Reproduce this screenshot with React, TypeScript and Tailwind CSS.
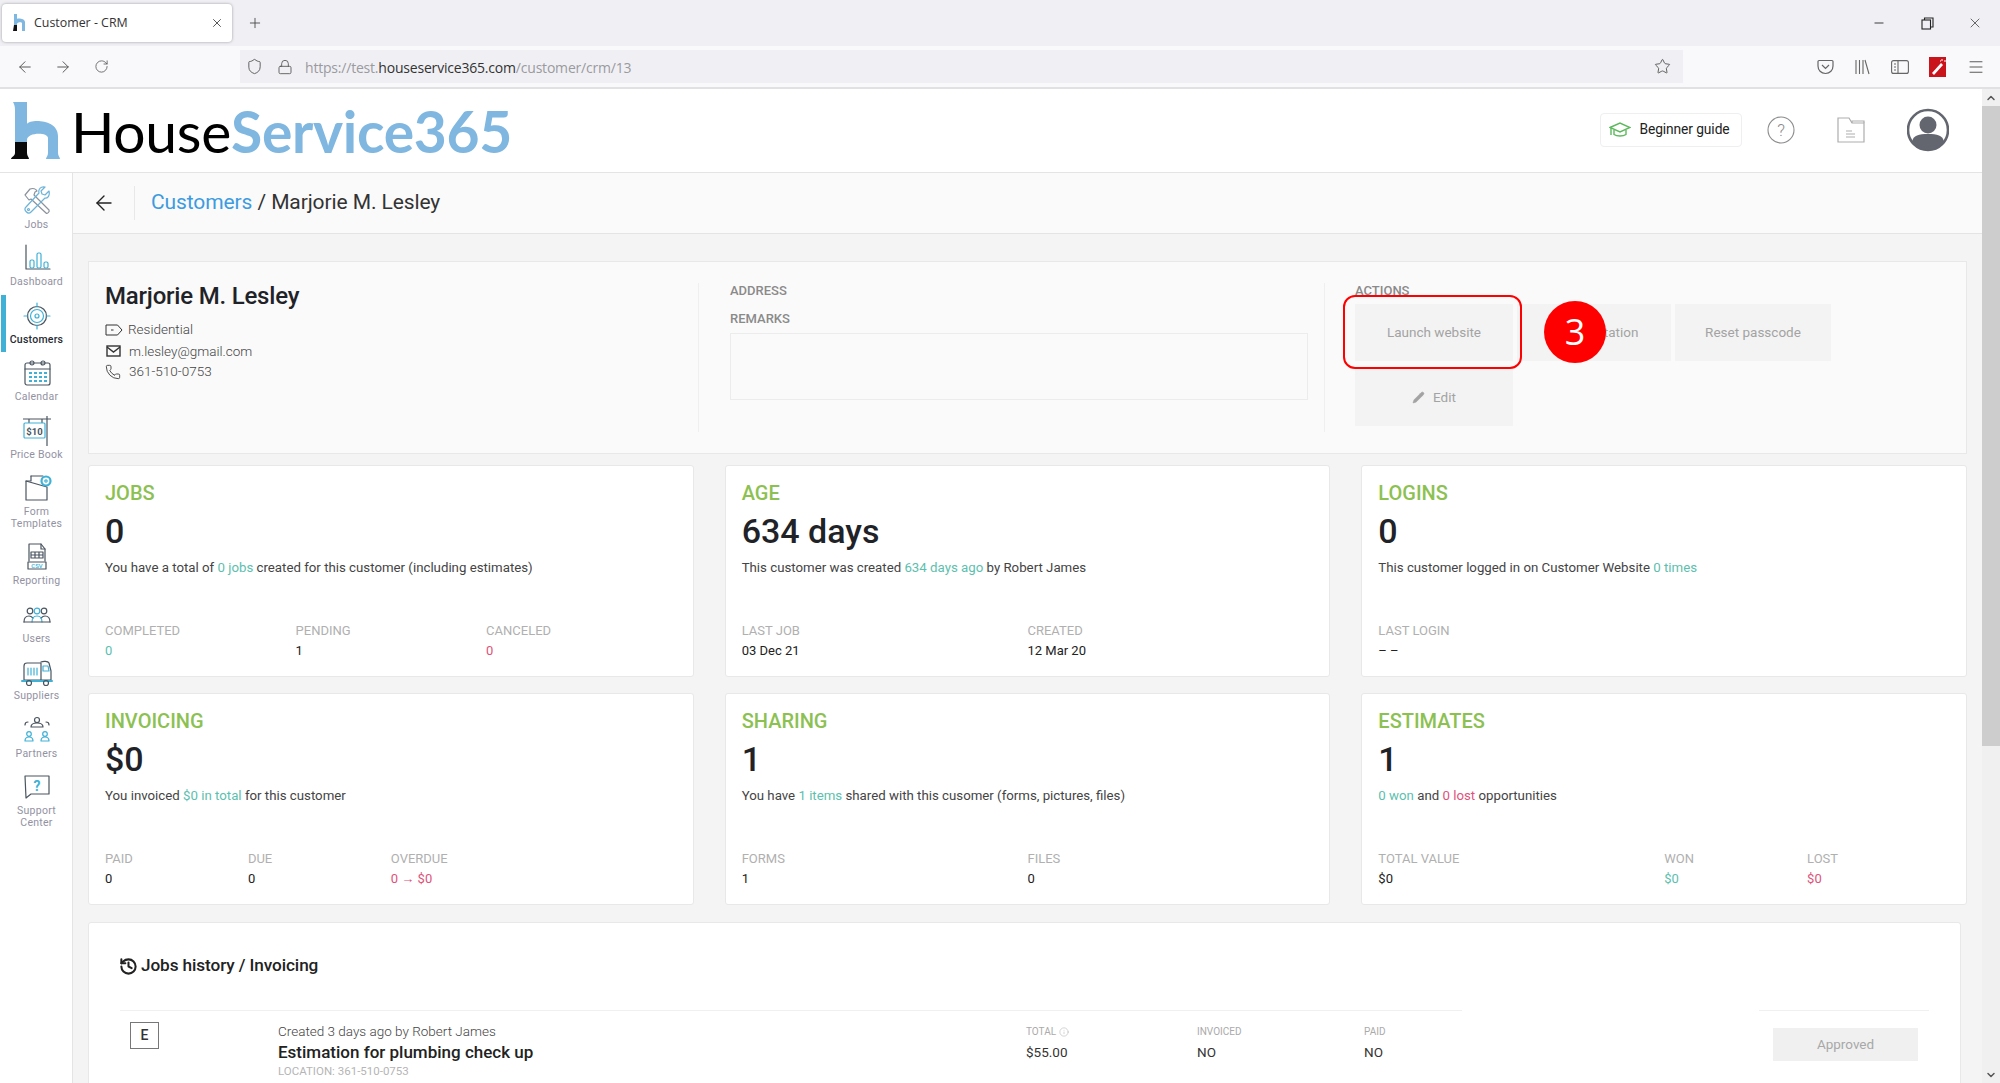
import React from "react";
import { ArrowLeft, ArrowRight, RotateCw, Shield, Lock, Star, X, Plus, Minus, Menu, Pencil, History, ChevronUp, ChevronDown, Info, Phone } from "lucide-react";

const Ink = "#4a5560";
const Blue = "#3fb1d6";

function Svg({ children, w = 30, h = 30, vb = "0 0 30 30" }: { children: React.ReactNode; w?: number; h?: number; vb?: string }) {
  return (
    <svg width={w} height={h} viewBox={vb} fill="none" stroke={Ink} strokeWidth="1.2" strokeLinecap="round" strokeLinejoin="round">
      {children}
    </svg>
  );
}

const icons: Record<string, React.ReactNode> = {
  jobs: (
    <Svg>
      <path d="M3 9 8 3c3-1 6 0 7 2l-2 1-1 3 15 15c1 2-2 4-3 3L9 13l-2 1z" stroke="#8a929c" />
      <path d="M27 5l-4 4-3-1-1-3 4-4c-4-1-7 2-6 6L4 21c-3 3 2 8 5 5L23 12c3 1 5-3 4-7z" stroke="#6db3d8" />
      <circle cx="6.500" cy="23.500" r="1" stroke="#6db3d8" />
    </Svg>
  ),
  dashboard: (
    <Svg>
      <path d="M4 2v24h24" />
      <rect x="8" y="17" width="4" height="8" rx="1.500" stroke={Blue} />
      <rect x="15" y="10" width="4" height="15" rx="1.500" stroke={Blue} />
      <rect x="22" y="19" width="4" height="6" rx="1.500" stroke={Blue} />
    </Svg>
  ),
  customers: (
    <Svg>
      <circle cx="15" cy="15" r="9.500" />
      <circle cx="15" cy="15" r="6.500" stroke={Blue} />
      <circle cx="15" cy="15" r="2" stroke={Blue} />
      <path d="M15 2v4M15 24v4M2 15h4M24 15h4" stroke={Blue} />
    </Svg>
  ),
  calendar: (
    <Svg>
      <rect x="3" y="5" width="25" height="22" rx="2" />
      <path d="M3 11h25" />
      <circle cx="10" cy="5" r="2" />
      <circle cx="21" cy="5" r="2" />
      <path d="M7 15h3M12 15h3M17 15h3M22 15h3M7 19h3M12 19h3M17 19h3M22 19h3M7 23h3M12 23h3M17 23h3M22 23h3" stroke={Blue} strokeWidth="2.200" strokeLinecap="butt" />
    </Svg>
  ),
  price: (
    <svg width="30" height="30" viewBox="0 0 30 30" fill="none" stroke={Ink} strokeWidth="1.2">
      <path d="M1 3h28M25 0v30" />
      <path d="M7 3v4M20 3v4" />
      <rect x="2" y="7" width="21" height="15" rx="1" stroke={Blue} />
      <text x="12.500" y="18.500" textAnchor="middle" fontSize="9.500" fontWeight="700" fill={Ink} stroke="none" fontFamily="Roboto">$10</text>
    </svg>
  ),
  form: (
    <Svg>
      <path d="M9 3h12M25 14v13H4V8z" />
      <path d="M4 8h5V3" />
      <circle cx="24" cy="8" r="4.500" stroke={Blue} strokeWidth="2.200" />
      <circle cx="24" cy="8" r="1.200" stroke={Blue} />
    </Svg>
  ),
  reporting: (
    <Svg>
      <path d="M7 2h12l4 5v12M7 19V2" />
      <path d="M19 2v5h4" />
      <path d="M9 10h12v6H9zM13 10v6M17 10v6M9 13h12" />
      <rect x="6" y="20" width="18" height="7" fill="#fff" stroke={Ink} />
      <text x="15" y="26" textAnchor="middle" fontSize="6" fontWeight="500" fill={Blue} stroke="none" fontFamily="Roboto">CSV</text>
    </Svg>
  ),
  users: (
    <Svg>
      <circle cx="8" cy="11" r="2.800" />
      <circle cx="22" cy="11" r="2.800" />
      <circle cx="15" cy="11" r="2.800" stroke={Blue} />
      <path d="M2 22c0-4 2-6 5-6 2 0 3 1 4 2M28 22c0-4-2-6-5-6-2 0-3 1-4 2" />
      <path d="M10 22c0-4 2-6 5-6s5 2 5 6" stroke={Blue} />
      <path d="M2 22h26" />
    </Svg>
  ),
  suppliers: (
    <Svg w={32} h={30} vb="0 0 32 30">
      <path d="M3 9c0-2 1-3 3-3h14v17H3z" />
      <path d="M7 11v7M10 11v7M13 11v7M16 11v7" stroke={Blue} />
      <path d="M20 5c2-1 7-1 8 1l2 8v9H20" />
      <path d="M22 9h5l1 5h-6z" stroke={Blue} />
      <path d="M1 24h30" stroke={Blue} strokeWidth="2" />
      <circle cx="8" cy="26" r="2.500" />
      <circle cx="25" cy="26" r="2.500" />
    </Svg>
  ),
  partners: (
    <Svg w={28} h={30} vb="0 0 28 30">
      <circle cx="14" cy="5" r="2.500" />
      <path d="M8 12c0-3 3-4 6-4s6 1 6 4z" />
      <path d="M2 10c0-2 1-3 3-3M26 10c0-2-1-3-3-3" />
      <circle cx="6" cy="19" r="2.300" stroke={Blue} />
      <path d="M2 26c0-3 2-4 4-4s4 1 4 4z" stroke={Blue} />
      <circle cx="22" cy="19" r="2.300" stroke={Blue} />
      <path d="M18 26c0-3 2-4 4-4s4 1 4 4z" stroke={Blue} />
    </Svg>
  ),
  support: (
    <Svg>
      <path d="M3 4h24v18H9l-5 4z" />
      <text x="15" y="18.500" textAnchor="middle" fontSize="14" fontWeight="700" fill={Blue} stroke="none" fontFamily="Roboto">?</text>
    </Svg>
  ),
};

const navItems: { key: string; label: string[]; active?: boolean }[] = [
  { key: "jobs", label: ["Jobs"] },
  { key: "dashboard", label: ["Dashboard"] },
  { key: "customers", label: ["Customers"], active: true },
  { key: "calendar", label: ["Calendar"] },
  { key: "price", label: ["Price Book"] },
  { key: "form", label: ["Form", "Templates"] },
  { key: "reporting", label: ["Reporting"] },
  { key: "users", label: ["Users"] },
  { key: "suppliers", label: ["Suppliers"] },
  { key: "partners", label: ["Partners"] },
  { key: "support", label: ["Support", "Center"] },
];

function Sidebar() {
  return (
    <aside className="w-[73px] shrink-0 border-r border-[#e4e4e4] bg-white pt-[12px] pl-[1px] flex flex-col">
      {navItems.map((n) => (
        <div key={n.key} className="relative flex flex-col items-center mb-[11.4px]">
          {n.active && <div className="absolute left-[0px] top-[-5px] w-[5px] h-[57px] bg-[#3fb1d6]" />}
          <div className="h-[32px] flex items-center justify-center">{icons[n.key]}</div>
          <div className={`text-[10.5px] leading-[12px] text-center mt-[2px] tracking-[0.25px] ${n.active ? "text-[#262b33] font-medium" : "text-[#9292a2]"}`}>
            {n.label.map((l) => (
              <div key={l}>{l}</div>
            ))}
          </div>
        </div>
      ))}
    </aside>
  );
}

function Stat({ label, value, className = "" }: { label: string; value: React.ReactNode; className?: string }) {
  return (
    <div className={className}>
      <div className="text-[13px] leading-[16px] text-[#b0b0b0] uppercase">{label}</div>
      <div className="text-[13px] leading-[16px] mt-[4px] text-[#222]">{value}</div>
    </div>
  );
}

const Teal = ({ children }: { children: React.ReactNode }) => <span className="text-[#5cc0ae]">{children}</span>;
const Red = ({ children }: { children: React.ReactNode }) => <span className="text-[#e0527a]">{children}</span>;

function Card({ title, big, desc, grid, children }: { title: string; big: string; desc: React.ReactNode; grid: string; children: React.ReactNode }) {
  return (
    <div className="h-[212px] bg-white border border-[#e8e8e8] rounded-[3px] px-[16px] pt-[15px] flex flex-col">
      <div className="text-[20px] leading-[24px] font-medium text-[#8cc152]">{title}</div>
      <div className="text-[34px] leading-[40px] font-medium text-[#1f2328] mt-[6px]">{big}</div>
      <div className="text-[13.25px] leading-[18px] text-[#444] mt-[8px]">{desc}</div>
      <div className={`grid ${grid} mt-auto mb-[17px]`}>{children}</div>
    </div>
  );
}

function ActionButton({ children, className = "" }: { children: React.ReactNode; className?: string }) {
  return <div className={`h-[57px] bg-[#f3f3f3] flex items-center justify-center text-[13.5px] text-[#a3a3a3] ${className}`}>{children}</div>;
}

export default function App() {
  return (
    <div className="w-[2000px] h-[1083px] overflow-hidden flex flex-col bg-white text-[#222] font-['Roboto',sans-serif]">
      {/* browser tab strip */}
      <div className="h-[46px] shrink-0 bg-[#f0f0f4] flex items-start pt-[4px] pl-[2px]">
        <div className="w-[230px] h-[38px] bg-white rounded-[4px] shadow-[0_0_3px_rgba(0,0,0,0.35)] flex items-center pl-[10px] pr-[8px]">
          <svg width="16" height="20" viewBox="0 0 16 20" className="shrink-0">
            <path d="M2 1h3v5c0-1 8-1 8 3v9h-3V10c0-1-5-1-5 1v1H2z" fill="#7fb7e0" />
            <path d="M2 12h3v6H1z" fill="#111" />
          </svg>
          <span className="ml-[6px] text-[12.4px] text-[#333] font-['Open_Sans',sans-serif] flex-1">Customer - CRM</span>
          <X size={14} strokeWidth={1.4} className="text-[#333]" />
        </div>
        <Plus size={16} strokeWidth={1.3} className="ml-[15px] mt-[11px] text-[#444]" />
        <div className="flex-1" />
        <div className="flex items-center h-[38px] pr-[17px] text-[#222]">
          <Minus size={14} strokeWidth={1.5} />
          <svg width="13" height="13" viewBox="0 0 13 13" fill="none" stroke="#222" strokeWidth="1.1" className="ml-[35px]">
            <rect x="1" y="3" width="8.500" height="9" />
            <path d="M3.500 3V1H12v9H9.500" />
          </svg>
          <X size={16} strokeWidth={1} className="ml-[33px]" />
        </div>
      </div>
      {/* browser nav bar */}
      <div className="h-[43px] shrink-0 bg-[#f9f9fb] border-b-2 border-[#e1e1e3] flex pt-[4px] pl-[16px]">
        <div className="flex items-center h-[33px] text-[#555]">
          <ArrowLeft size={18} strokeWidth={1.3} />
          <ArrowRight size={18} strokeWidth={1.3} className="ml-[20px]" />
          <RotateCw size={15} strokeWidth={1.3} className="ml-[22px]" />
        </div>
        <div className="ml-[131px] w-[1443px] h-[33px] bg-[#f0f0f4] flex items-center pl-[6px] pr-[12px] text-[#555]">
          <Shield size={17} strokeWidth={1.3} />
          <Lock size={16} strokeWidth={1.3} className="ml-[14px]" />
          <div className="ml-[12px] mt-[1px] text-[14px] text-[#9a9a9f] font-['Open_Sans',sans-serif] flex-1 tracking-[-0.2px]">
            https://test.<span className="text-[#333]">houseservice365.com</span>/customer/crm/13
          </div>
          <Star size={17} strokeWidth={1.3} />
        </div>
        <div className="flex items-center h-[33px] ml-[134px] text-[#555]">
          <svg width="17" height="16" viewBox="0 0 17 16" fill="none" stroke="#666" strokeWidth="1.200">
            <path d="M2 1.500h13c.5 0 1 .5 1 1V7c0 4-3 7.500-7.500 7.500S1 11 1 7V2.500c0-.5.500-1 1-1z" />
            <path d="M5 6l3.500 3.500L12 6" />
          </svg>
          <svg width="15" height="16" viewBox="0 0 15 16" fill="none" stroke="#666" strokeWidth="1.100" className="ml-[21px]">
            <path d="M1 1v14M4.500 1v14M8 1v14M10 1l4 14" />
          </svg>
          <svg width="18" height="14" viewBox="0 0 18 14" fill="none" stroke="#666" strokeWidth="1.100" className="ml-[21px]">
            <rect x="0.600" y="0.600" width="16.800" height="12.800" rx="2" />
            <path d="M7 1v12M3 4h2M3 7h2M3 10h2" />
          </svg>
          <svg width="17" height="20" viewBox="0 0 17 20" className="ml-[20px]">
            <rect width="17" height="20" fill="#c9141c" />
            <path d="M3 16 12 6l2 2-9 10z" fill="#fff" />
            <path d="M13 2v2M15 4h2M11 4h1" stroke="#fff" strokeWidth="1" />
          </svg>
          <Menu size={18} strokeWidth={1.3} className="ml-[21px]" />
        </div>
      </div>
      <div className="flex-1 flex min-h-0">
        <div className="flex-1 min-w-0 flex flex-col">
          {/* app header */}
          <header className="h-[84px] shrink-0 bg-white border-b border-[#e4e4e4] flex items-center pl-[11px]">
            <svg width="50" height="60" viewBox="0 0 50 60" className="shrink-0">
              <path d="M2 1h14v22c3-5 31-5 31 12v17c0 3 2 4 2 6H35c0-2 2-3 2-6V37c0-6-21-6-21 2v2H4V9C4 5 3 3 2 1z" fill="#7fb7e0" />
              <path d="M4 41h12v11c0 3 2 4 2 6H0c0-2 4-3 4-6z" fill="#0a0a0a" />
            </svg>
            <div className="ml-[10px] text-[57px] leading-[60px] font-['Lato',sans-serif] text-black whitespace-nowrap tracking-[-0.3px]">
              House<span className="text-[#7fb7e0] font-bold">Service365</span>
            </div>
            <div className="flex-1" />
            <div className="mb-[2px] flex items-center">
              <div className="w-[142px] h-[34px] bg-white border border-[#efefef] rounded-[4px] flex items-center justify-center text-[13.8px] text-[#222] tracking-[-0.1px] pr-[3px]">
                <svg width="22" height="16" viewBox="0 0 22 16" fill="none" stroke="#5cb85c" strokeWidth="1.400" className="mr-[8px]">
                  <path d="M1 5.500 11 1l10 4.500-10 4.500z" />
                  <path d="M5 8v4.500c3 2 9 2 12 0V8" />
                  <path d="M2 6v7" />
                </svg>
                Beginner guide
              </div>
              <svg width="28" height="28" viewBox="0 0 28 28" fill="none" stroke="#8c8c8c" strokeWidth="1.100" className="ml-[25px]">
                <circle cx="14" cy="14" r="13" />
                <text x="14" y="20" textAnchor="middle" fontSize="17" fill="#8c8c8c" stroke="none" fontFamily="Roboto" fontWeight="300">?</text>
              </svg>
              <svg width="28" height="26" viewBox="0 0 28 26" fill="none" stroke="#adadad" strokeWidth="1.200" className="ml-[42px]">
                <path d="M1 25V1h11l3 5h12v19z" />
                <path d="M15 6V4h12v2" />
                <path d="M9 14h6M9 17h9M9 20h9" />
              </svg>
              <svg width="42" height="44" viewBox="0 0 42 44" className="ml-[42px] mr-[33px]">
                <circle cx="21" cy="22" r="20" fill="#fff" stroke="#63666f" strokeWidth="2.600" />
                <circle cx="21" cy="17" r="8.500" fill="#63666f" />
                <path d="M5 34c1-7 7-8 16-8s15 1 16 8c-4 5-10 8-16 8S9 39 5 34z" fill="#63666f" />
              </svg>
            </div>
          </header>
          <div className="flex-1 flex min-h-0">
            <Sidebar />
            <main className="flex-1 min-w-0 flex flex-col overflow-hidden bg-[#f4f4f4]">
              <div className="h-[61px] shrink-0 bg-[#fafafa] border-b border-[#e4e4e4] flex items-center pl-[19px]">
                <ArrowLeft size={24} strokeWidth={1.4} className="text-[#222]" />
                <div className="ml-[18px] h-[34px] border-l border-[#e8e8e8]" />
                <div className="ml-[16px] text-[21px] text-[#333] tracking-[-0.1px]">
                  <span className="text-[#3d9be0]">Customers</span> / Marjorie M. Lesley
                </div>
              </div>
              <div className="px-[15px] pt-[27px] flex flex-col">
                {/* customer panel */}
                <section className="h-[193px] bg-[#fafafa] border border-[#e8e8e8] flex pt-[21px] pb-[21px]">
                  <div className="w-[610px] shrink-0 pl-[16px] border-r border-[#efefef]">
                    <div className="text-[24px] leading-[28px] -mt-[1px] font-medium text-[#1f2328] tracking-[-0.2px]">Marjorie M. Lesley</div>
                    <div className="mt-[9px] text-[13.5px] text-[#444] font-light">
                      <div className="flex items-center h-[21px]">
                        <svg width="18" height="12" viewBox="0 0 18 12" fill="none" stroke="#333" strokeWidth="1">
                          <path d="M1 1h11.500L17 6l-4.500 5H1z" />
                          <path d="M6 6h2.500" />
                        </svg>
                        <span className="ml-[5px]">Residential</span>
                      </div>
                      <div className="flex items-center h-[22px]">
                        <svg width="15" height="12" viewBox="0 0 15 12" fill="none" stroke="#333" strokeWidth="1.400" className="ml-[1px]">
                          <rect x="1" y="1" width="13" height="10" />
                          <path d="M1 2l6.500 5L14 2" />
                        </svg>
                        <span className="ml-[8px]">m.lesley@gmail.com</span>
                      </div>
                      <div className="flex items-center h-[19px]">
                        <Phone size={16} strokeWidth={1.3} className="text-[#333]" />
                        <span className="ml-[8px]">361-510-0753</span>
                      </div>
                    </div>
                  </div>
                  <div className="w-[626px] shrink-0 pl-[31px] pr-[17px] border-r border-[#efefef]">
                    <div className="text-[13px] leading-[16px] font-medium text-[#8a8a8a] uppercase">Address</div>
                    <div className="mt-[12px] text-[13px] leading-[16px] font-medium text-[#8a8a8a] uppercase">Remarks</div>
                    <div className="mt-[6px] w-[578px] h-[67px] bg-[#fafafa] border border-[#ececec]" />
                  </div>
                  <div className="pl-[30px]">
                    <div className="text-[13px] leading-[16px] font-medium text-[#8a8a8a] uppercase">Actions</div>
                    <div className="relative mt-[5px] flex flex-wrap w-[480px] gap-x-[4px] gap-y-[8px]">
                      <ActionButton className="w-[158px]">Launch website</ActionButton>
                      <ActionButton className="w-[154px]">Send invitation</ActionButton>
                      <ActionButton className="w-[156px]">Reset passcode</ActionButton>
                      <ActionButton className="w-[158px]">
                        <Pencil size={13} fill="#a3a3a3" strokeWidth={1} className="mr-[8px]" />
                        Edit
                      </ActionButton>
                      <div className="absolute left-[-12px] top-[-9px] w-[179px] h-[74px] border-2 border-[#ff0000] rounded-[12px]" />
                      <div className="absolute left-[189px] top-[-3px] w-[62px] h-[62px] rounded-full bg-[#ff0000] text-white flex items-center justify-center text-[36px] font-['Open_Sans',sans-serif]">3</div>
                    </div>
                  </div>
                </section>
                {/* stat cards */}
                <div className="mt-[11px] grid grid-cols-3 gap-x-[31px] gap-y-[16px]">
                  <Card title="JOBS" big="0" grid="grid-cols-3" desc={<>You have a total of <Teal>0 jobs</Teal> created for this customer (including estimates)</>}>
                    <Stat label="Completed" value={<Teal>0</Teal>} />
                    <Stat label="Pending" value="1" />
                    <Stat label="Canceled" value={<Red>0</Red>} />
                  </Card>
                  <Card title="AGE" big="634 days" grid="grid-cols-2" desc={<>This customer was created <Teal>634 days ago</Teal> by Robert James</>}>
                    <Stat label="Last job" value="03 Dec 21" />
                    <Stat label="Created" value="12 Mar 20" />
                  </Card>
                  <Card title="LOGINS" big="0" grid="grid-cols-1" desc={<>This customer logged in on Customer Website <Teal>0 times</Teal></>}>
                    <Stat label="Last login" value="– –" />
                  </Card>
                  <Card title="INVOICING" big="$0" grid="grid-cols-4" desc={<>You invoiced <Teal>$0 in total</Teal> for this customer</>}>
                    <Stat label="Paid" value="0" />
                    <Stat label="Due" value="0" />
                    <Stat label="Overdue" className="col-span-2" value={<Red>0 <span className="font-bold">→</span> $0</Red>} />
                  </Card>
                  <Card title="SHARING" big="1" grid="grid-cols-2" desc={<>You have <Teal>1 items</Teal> shared with this cusomer (forms, pictures, files)</>}>
                    <Stat label="Forms" value="1" />
                    <Stat label="Files" value="0" />
                  </Card>
                  <Card title="ESTIMATES" big="1" grid="grid-cols-4" desc={<><Teal>0 won</Teal> and <Red>0 lost</Red> opportunities</>}>
                    <Stat label="Total value" className="col-span-2" value="$0" />
                    <Stat label="Won" value={<Teal>$0</Teal>} />
                    <Stat label="Lost" value={<Red>$0</Red>} />
                  </Card>
                </div>
                {/* history */}
                <section className="mt-[17px] mr-[6px] h-[300px] bg-white border border-[#e8e8e8] rounded-[3px] px-[31px]">
                  <div className="flex items-center h-[87px] pb-[1px]">
                    <History size={19} strokeWidth={2.6} className="text-[#222] -ml-[1px]" />
                    <span className="ml-[3px] text-[17.2px] font-medium text-[#222] tracking-[-0.1px]">Jobs history / Invoicing</span>
                  </div>
                  <div className="flex">
                    <div className="w-[1342px] border-t border-[#f0f0f0]" />
                    <div className="ml-[297px] w-[170px] border-t border-[#f0f0f0]" />
                  </div>
                  <div className="flex pt-[11px]">
                    <div className="ml-[10px] w-[29px] h-[27px] border border-[#777] flex items-center justify-center text-[14px] font-medium text-[#333]">E</div>
                    <div className="ml-[119px] w-[748px]">
                      <div className="text-[13.5px] leading-[18px] text-[#444] font-light">Created 3 days ago by Robert James</div>
                      <div className="text-[17px] leading-[22px] font-medium text-[#222] mt-[1px]">Estimation for plumbing check up</div>
                      <div className="text-[11.5px] leading-[14px] text-[#b5b5b5] mt-[1px]">LOCATION: 361-510-0753</div>
                    </div>
                    <div className="w-[171px] pt-[3px]">
                      <div className="text-[10px] leading-[14px] text-[#aaa] flex items-center gap-[3px]">TOTAL <Info size={10} strokeWidth={1.2} /></div>
                      <div className="text-[13.5px] leading-[18px] mt-[4px] text-[#333]">$55.00</div>
                    </div>
                    <div className="w-[167px] pt-[3px]">
                      <div className="text-[10px] leading-[14px] text-[#aaa]">INVOICED</div>
                      <div className="text-[13.5px] leading-[18px] mt-[4px] text-[#333]">NO</div>
                    </div>
                    <div className="w-[409px] pt-[3px]">
                      <div className="text-[10px] leading-[14px] text-[#aaa]">PAID</div>
                      <div className="text-[13.5px] leading-[18px] mt-[4px] text-[#333]">NO</div>
                    </div>
                    <div className="w-[145px] h-[33px] mt-[6px] bg-[#f0f0f0] flex items-center justify-center text-[13.5px] text-[#a8a8a8]">Approved</div>
                  </div>
                </section>
              </div>
            </main>
          </div>
        </div>
        {/* scrollbar */}
        <div className="w-[18px] shrink-0 bg-[#f0f0f0] flex flex-col items-center justify-between">
          <div className="w-full">
            <div className="h-[17px] flex items-center justify-center"><ChevronUp size={12} strokeWidth={3} className="text-[#555]" /></div>
            <div className="h-[640px] bg-[#cdcdcd]" />
          </div>
          <div className="h-[17px] flex items-center justify-center"><ChevronDown size={12} strokeWidth={3} className="text-[#555]" /></div>
        </div>
      </div>
    </div>
  );
}
